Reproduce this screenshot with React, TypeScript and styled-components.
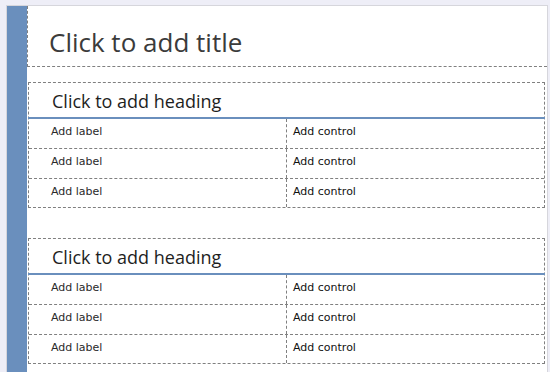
import React from 'react'
import styled, { createGlobalStyle } from 'styled-components'

const GlobalStyle = createGlobalStyle`
  html, body {
    margin: 0;
    padding: 0;
    background: #eeeef7;
    overflow: hidden;
  }
`

const Page = styled.div`
  display: flex;
  margin: 5px 0 0 6px;
  width: 542px;
  height: calc(100vh - 5px);
  box-sizing: border-box;
  background: #fff;
  border: 1px solid #d6d6dc;
  border-bottom: none;
`

const SideBar = styled.div`
  width: 20px;
  flex-shrink: 0;
  background: #6a8fbd;
`

const Content = styled.div`
  flex: 1;
  display: flex;
  flex-direction: column;
`

const Title = styled.div`
  height: 61px;
  box-sizing: border-box;
  padding: 18px 0 0 21px;
  border-left: 1px dashed #808080;
  border-bottom: 1px dashed #808080;
  font-family: 'Open Sans', sans-serif;
  font-size: 26px;
  line-height: 36px;
  color: #3b3b3b;
`

const Section = styled.div<{ $first?: boolean }>`
  margin: ${({ $first }) => ($first ? '15px' : '30px')} 2px 0 1px;
  border: 1px dashed #808080;
`

const Heading = styled.div`
  margin: 0 -1px;
  padding: 6px 0 4px 24px;
  border-bottom: 2px solid #6a8fbd;
  font-family: 'Open Sans', sans-serif;
  font-size: 18px;
  line-height: 24px;
  color: #1e1e1e;
`

const Row = styled.div<{ $last?: boolean }>`
  display: grid;
  grid-template-columns: 258px 1fr;
  height: ${({ $last }) => ($last ? '28px' : '29px')};
  border-bottom: ${({ $last }) => ($last ? 'none' : '1px dashed #808080')};
  font-family: 'DejaVu Sans', sans-serif;
  font-size: 11px;
  line-height: 13px;
`

const Label = styled.div`
  padding: 6px 0 0 22px;
  border-right: 1px dashed #808080;
  color: #2a2a2a;
`

const Control = styled.div`
  padding: 6px 0 0 6px;
  color: #111;
`

const FormSection = ({ first }: { first?: boolean }) => (
  <Section $first={first}>
    <Heading>Click to add heading</Heading>
    {[0, 1, 2].map((i) => (
      <Row key={i} $last={i === 2}>
        <Label>Add label</Label>
        <Control>Add control</Control>
      </Row>
    ))}
  </Section>
)

const App = () => (
  <>
    <GlobalStyle />
    <Page>
      <SideBar />
      <Content>
        <Title>Click to add title</Title>
        <FormSection first />
        <FormSection />
      </Content>
    </Page>
  </>
)

export default App
